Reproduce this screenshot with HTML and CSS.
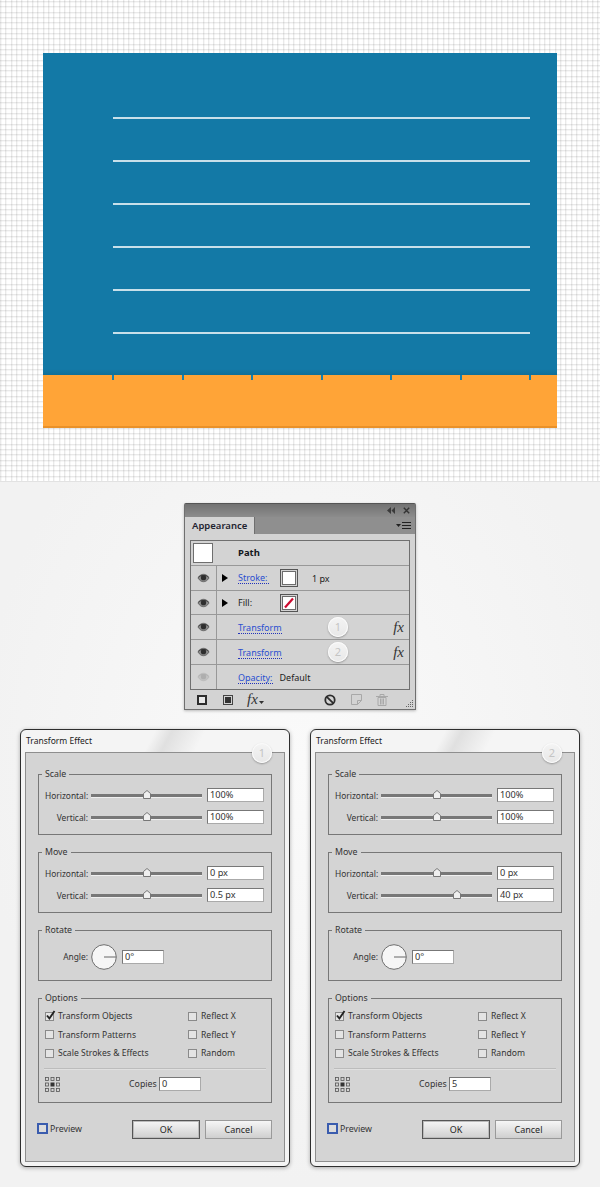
FILE: index.html
```html
<!DOCTYPE html>
<html lang="en">
<head>
<meta charset="utf-8">
<title>Transform Effect</title>
<link rel="stylesheet" href="styles.css">
</head>
<body>
<svg class="sprite" aria-hidden="true">
  <symbol id="eye" viewBox="0 0 14 10"><path d="M1 5C3 2 5 1 7 1s4 1 6 4c-2 3-4 4-6 4S3 8 1 5z" fill="#8a8a8a" stroke="#555" stroke-width=".8"/><circle cx="7" cy="4.6" r="2.8" fill="#2e2e2e"/><path d="M1.5 4C4 1.6 10 1.6 12.5 4" fill="none" stroke="#333" stroke-width="1"/></symbol>
  <symbol id="anchors" viewBox="0 0 15 15"><g fill="none" stroke="#555" stroke-width=".8"><rect x=".5" y=".5" width="3" height="3"/><rect x="6" y=".5" width="3" height="3"/><rect x="11.5" y=".5" width="3" height="3"/><rect x=".5" y="6" width="3" height="3"/><rect x="11.5" y="6" width="3" height="3"/><rect x=".5" y="11.5" width="3" height="3"/><rect x="6" y="11.5" width="3" height="3"/><rect x="11.5" y="11.5" width="3" height="3"/></g><rect x="5.5" y="5.5" width="4" height="4" fill="#333"/></symbol>
  <symbol id="check" viewBox="0 0 11 11"><path d="M2 5.500l2.400 3L9.500 1" fill="none" stroke="#222" stroke-width="1.900"/></symbol>
  <symbol id="dial" viewBox="0 0 26 26"><circle cx="13" cy="13" r="12.300" fill="#f6f6f6" stroke="#6e6e6e" stroke-width="1"/><path d="M13 13h12" stroke="#666" stroke-width="1"/></symbol>
  <symbol id="thumb" viewBox="0 0 8 9"><path d="M.5 8.500V3.500L4 .5l3.500 3v5z" fill="#efefef" stroke="#777" stroke-width="1"/></symbol>
</svg>

<section class="canvas">
  <div class="art">
    <div class="sky">
      <i class="rule"></i><i class="rule"></i><i class="rule"></i><i class="rule"></i><i class="rule"></i><i class="rule"></i>
    </div>
    <div class="band">
      <i class="tick"></i><i class="tick"></i><i class="tick"></i><i class="tick"></i><i class="tick"></i><i class="tick"></i><i class="tick"></i>
    </div>
  </div>
</section>

<section class="lower">
  <div class="panel">
    <div class="panel-title">
      <svg class="collapse" viewBox="0 0 8 7"><path d="M4 0v7L0 3.500zM8 0v7L4.500 3.500z" fill="#3a3a3a"/></svg>
      <svg class="close" viewBox="0 0 7 7"><path d="M.8.8l5.400 5.400M6.200.8L.8 6.200" stroke="#333" stroke-width="1.400"/></svg>
    </div>
    <div class="panel-tabs">
      <div class="tab">Appearance</div>
      <svg class="menu" viewBox="0 0 16 8"><path d="M0 2h5L2.500 5z" fill="#222"/><path d="M6 .5h9M6 3.500h9M6 6.500h9" stroke="#222" stroke-width="1"/></svg>
    </div>
    <div class="table">
      <div class="row row-path">
        <div class="cell-thumb"><span class="thumbnail"></span></div>
        <b class="path-name">Path</b>
      </div>
      <div class="row">
        <div class="cell-eye"><svg class="eye"><use href="#eye"/></svg></div>
        <span class="tri"></span>
        <a class="link link-stroke">Stroke:</a>
        <span class="swatch"></span>
        <span class="weight">1 px</span>
      </div>
      <div class="row row-short">
        <div class="cell-eye"><svg class="eye"><use href="#eye"/></svg></div>
        <span class="tri"></span>
        <span class="plain link-stroke">Fill:</span>
        <span class="swatch"><svg viewBox="0 0 12 12"><path d="M2 10.500L10 1.500" stroke="#cc0a2f" stroke-width="2.200"/></svg></span>
      </div>
      <div class="row">
        <div class="cell-eye"><svg class="eye"><use href="#eye"/></svg></div>
        <a class="link link-indent">Transform</a>
        <span class="badge badge-row">1</span>
        <i class="fx">fx</i>
      </div>
      <div class="row">
        <div class="cell-eye"><svg class="eye"><use href="#eye"/></svg></div>
        <a class="link link-indent">Transform</a>
        <span class="badge badge-row">2</span>
        <i class="fx">fx</i>
      </div>
      <div class="row row-last">
        <div class="cell-eye"><svg class="eye faded"><use href="#eye"/></svg></div>
        <a class="link link-indent">Opacity:</a>
        <span class="plain opacity-value">Default</span>
      </div>
    </div>
    <div class="panel-foot">
      <span class="ico-square"></span>
      <span class="ico-square2"></span>
      <i class="fx fx-foot">fx<svg class="fx-arrow" viewBox="0 0 5 3"><path d="M0 0h5L2.500 3z" fill="#333"/></svg></i>
      <svg class="ico-no" viewBox="0 0 12 12"><circle cx="6" cy="6" r="4.700" fill="none" stroke="#2c2c2c" stroke-width="1.800"/><path d="M2.800 2.800l6.400 6.400" stroke="#2c2c2c" stroke-width="1.800"/></svg>
      <svg class="ico-new" viewBox="0 0 11 11"><path d="M.5.5h10v6l-4 4h-6z" fill="none" stroke="#a8a8a8"/><path d="M10.500 6.500h-4v4" fill="none" stroke="#a8a8a8"/></svg>
      <svg class="ico-trash" viewBox="0 0 12 12"><path d="M0 2.500h12M4 2V.5h4V2M2 3.500h8v8H2zM4.500 4.500v6M6 4.500v6M7.500 4.500v6" fill="none" stroke="#a8a8a8"/></svg>
      <svg class="grip" viewBox="0 0 9 9"><path d="M7 1h1v1H7zM5 3h1v1H5zM7 3h1v1H7zM3 5h1v1H3zM5 5h1v1H5zM7 5h1v1H7zM1 7h1v1H1zM3 7h1v1H3zM5 7h1v1H5zM7 7h1v1H7z" fill="#666"/></svg>
    </div>
  </div>

  <div class="dialogs">
    <div class="dialog">
      <div class="dialog-title">Transform Effect</div>
      <span class="badge badge-dialog">1</span>
      <div class="dialog-body">
        <div class="group">
          <div class="legend">Scale</div>
          <div class="slider-row"><label class="lab">Horizontal:</label><div class="track"><svg class="thumb"><use href="#thumb"/></svg></div><span class="field">100%</span></div>
          <div class="slider-row"><label class="lab">Vertical:</label><div class="track"><svg class="thumb"><use href="#thumb"/></svg></div><span class="field">100%</span></div>
        </div>
        <div class="group">
          <div class="legend">Move</div>
          <div class="slider-row"><label class="lab">Horizontal:</label><div class="track"><svg class="thumb"><use href="#thumb"/></svg></div><span class="field">0 px</span></div>
          <div class="slider-row"><label class="lab">Vertical:</label><div class="track"><svg class="thumb"><use href="#thumb"/></svg></div><span class="field">0.5 px</span></div>
        </div>
        <div class="group group-rotate">
          <div class="legend">Rotate</div>
          <div class="angle-row"><label class="lab">Angle:</label><svg class="dial"><use href="#dial"/></svg><span class="field field-short">0°</span></div>
        </div>
        <div class="group group-options">
          <div class="legend">Options</div>
          <div class="checks">
            <div class="chk"><span class="box"><svg><use href="#check"/></svg></span>Transform Objects</div>
            <div class="chk"><span class="box"></span>Reflect X</div>
            <div class="chk"><span class="box"></span>Transform Patterns</div>
            <div class="chk"><span class="box"></span>Reflect Y</div>
            <div class="chk"><span class="box"></span>Scale Strokes &amp; Effects</div>
            <div class="chk"><span class="box"></span>Random</div>
          </div>
          <div class="sep"></div>
          <div class="copies-row">
            <svg class="anchors"><use href="#anchors"/></svg>
            <label class="copies-label">Copies</label>
            <span class="field field-short">0</span>
          </div>
        </div>
        <div class="actions">
          <div class="preview"><span class="box box-focus"></span>Preview</div>
          <div class="btn btn-ok">OK</div>
          <div class="btn">Cancel</div>
        </div>
      </div>
    </div>

    <div class="dialog">
      <div class="dialog-title">Transform Effect</div>
      <span class="badge badge-dialog">2</span>
      <div class="dialog-body">
        <div class="group">
          <div class="legend">Scale</div>
          <div class="slider-row"><label class="lab">Horizontal:</label><div class="track"><svg class="thumb"><use href="#thumb"/></svg></div><span class="field">100%</span></div>
          <div class="slider-row"><label class="lab">Vertical:</label><div class="track"><svg class="thumb"><use href="#thumb"/></svg></div><span class="field">100%</span></div>
        </div>
        <div class="group">
          <div class="legend">Move</div>
          <div class="slider-row"><label class="lab">Horizontal:</label><div class="track"><svg class="thumb"><use href="#thumb"/></svg></div><span class="field">0 px</span></div>
          <div class="slider-row"><label class="lab">Vertical:</label><div class="track"><svg class="thumb thumb-far"><use href="#thumb"/></svg></div><span class="field">40 px</span></div>
        </div>
        <div class="group group-rotate">
          <div class="legend">Rotate</div>
          <div class="angle-row"><label class="lab">Angle:</label><svg class="dial"><use href="#dial"/></svg><span class="field field-short">0°</span></div>
        </div>
        <div class="group group-options">
          <div class="legend">Options</div>
          <div class="checks">
            <div class="chk"><span class="box"><svg><use href="#check"/></svg></span>Transform Objects</div>
            <div class="chk"><span class="box"></span>Reflect X</div>
            <div class="chk"><span class="box"></span>Transform Patterns</div>
            <div class="chk"><span class="box"></span>Reflect Y</div>
            <div class="chk"><span class="box"></span>Scale Strokes &amp; Effects</div>
            <div class="chk"><span class="box"></span>Random</div>
          </div>
          <div class="sep"></div>
          <div class="copies-row">
            <svg class="anchors"><use href="#anchors"/></svg>
            <label class="copies-label">Copies</label>
            <span class="field field-short">5</span>
          </div>
        </div>
        <div class="actions">
          <div class="preview"><span class="box box-focus"></span>Preview</div>
          <div class="btn btn-ok">OK</div>
          <div class="btn">Cancel</div>
        </div>
      </div>
    </div>
  </div>
</section>
</body>
</html>
```

FILE: styles.css
```css
* { box-sizing: border-box; }
html, body { margin: 0; padding: 0; }
body {
  width: 600px;
  height: 1187px;
  overflow: hidden;
  background: #f2f2f2;
  font-family: "Noto Sans", "Open Sans", sans-serif;
  font-size: 9px;
  color: #2a2a2a;
}
.sprite { display: none; }

/* artboard */
.canvas {
  height: 482px;
  padding: 53px 43px 0;
  background-color: #fff;
  background-image:
    linear-gradient(to right,
      rgba(0,0,0,.085) 0 1px, rgba(0,0,0,.03) 1px 2px, transparent 2px 5px,
      rgba(0,0,0,.085) 5px 6px, rgba(0,0,0,.03) 6px 7px, transparent 7px 11px,
      rgba(0,0,0,.085) 11px 12px, rgba(0,0,0,.03) 12px 13px, transparent 13px 16px),
    linear-gradient(to bottom,
      rgba(0,0,0,.085) 0 1px, rgba(0,0,0,.03) 1px 2px, transparent 2px 5px,
      rgba(0,0,0,.085) 5px 6px, rgba(0,0,0,.03) 6px 7px, transparent 7px 11px,
      rgba(0,0,0,.085) 11px 12px, rgba(0,0,0,.03) 12px 13px, transparent 13px 16px);
  background-size: 16px 16px;
  background-position: 0 1px;
  border-bottom: 1px solid #e2e2e2;
}
.art { width: 514px; height: 375px; display: flex; flex-direction: column; }
.sky {
  height: 322px;
  padding: 64px 27px 0 70px;
  display: flex;
  flex-direction: column;
  gap: 41px;
  background: linear-gradient(to bottom, #1379a6 0, #1379a6 316px, #106f97 322px);
}
.rule { display: block; height: 2px; background: #c8e0ea; }
.band {
  height: 53px;
  padding: 0 26px 0 69px;
  display: flex;
  justify-content: space-between;
  align-items: flex-start;
  background: #ffa437;
  border-bottom: 2px solid #ea9128;
}
.tick { display: block; width: 2px; height: 5px; background: #1580b0; }

/* lower */
.lower {
  height: 705px;
  padding-top: 21px;
  background: radial-gradient(ellipse 320px 420px at 300px 280px, #fafafa 0, #f2f2f2 100%);
}

/* appearance panel */
.panel {
  width: 232px;
  height: 207px;
  margin-left: 184px;
  background: #d3d3d3;
  border: 1px solid #6f6f6f;
  border-top-color: #555;
  border-radius: 2px 2px 0 0;
  box-shadow: 0 1px 3px rgba(0,0,0,.25);
  display: flex;
  flex-direction: column;
}
.panel-title {
  height: 13px;
  display: flex;
  justify-content: flex-end;
  align-items: center;
  gap: 8px;
  padding-right: 5px;
  background: linear-gradient(#727272, #8c8c8c);
}
.collapse { width: 8px; height: 7px; }
.close { width: 7px; height: 7px; }
.panel-tabs {
  height: 17px;
  display: flex;
  justify-content: space-between;
  align-items: center;
  padding-right: 3px;
  background: #8f8f8f;
}
.tab {
  width: 70px;
  height: 17px;
  padding-left: 7px;
  background: #d3d3d3;
  border-right: 1px solid #6f6f6f;
  font-size: 9.500px;
  font-weight: 600;
  line-height: 17px;
  color: #1f2430;
}
.menu { width: 16px; height: 8px; }
.table {
  margin: 6px 5px 0;
  height: 150px;
  border: 1px solid #6f6f6f;
  display: flex;
  flex-direction: column;
}
.row {
  position: relative;
  height: 25px;
  display: flex;
  align-items: center;
  border-bottom: 1px solid #989898;
}
.row-short { height: 24px; }
.row-last { border-bottom: 0; height: 24px; }
.cell-eye {
  width: 26px;
  align-self: stretch;
  flex: none;
  border-right: 1px solid #989898;
  display: flex;
  align-items: center;
  justify-content: center;
}
.cell-thumb { width: 26px; flex: none; padding-left: 2px; }
.thumbnail { display: block; width: 20px; height: 20px; background: #fff; border: 1px solid #6f6f6f; }
.eye { width: 13px; height: 10px; }
.faded { opacity: .22; }
.tri {
  margin-left: 5px;
  width: 0; height: 0;
  border-left: 6px solid #000;
  border-top: 4.500px solid transparent;
  border-bottom: 4.500px solid transparent;
}
.path-name { margin: -2px 0 0 21px; font-size: 9.500px; font-weight: 700; color: #141820; }
.link {
  color: #2a4fd0;
  border-bottom: 1px dotted #2233bb;
  line-height: 11px;
}
.plain { color: #1c1c1c; }
.link-stroke { margin-left: 10px; width: 31px; flex: none; }
.plain.link-stroke { width: auto; }
.link-indent { margin: 2px 0 0 21px; }
.swatch {
  position: absolute;
  left: 89px;
  top: 3px;
  width: 18px;
  height: 18px;
  padding: 2px;
  display: block;
  border: 1px solid #555;
  box-shadow: inset 0 0 0 1px #d3d3d3, inset 0 0 0 2px #6c6c6c, inset 0 0 0 20px #fff;
}
.swatch svg { display: block; width: 12px; height: 12px; }
.weight { position: absolute; left: 121px; color: #1c1c1c; }
.opacity-value { margin: 0 0 0 7px; }
.fx {
  position: absolute;
  right: 5px;
  font-family: "Liberation Serif", serif;
  font-size: 15px;
  font-style: italic;
  color: #333;
  line-height: 14px;
}
.badge {
  position: absolute;
  width: 20px;
  height: 20px;
  border-radius: 50%;
  background: linear-gradient(#f4f4f4, #e8e8e8);
  box-shadow: 0 1px 2px rgba(0,0,0,.3), inset 0 0 0 1px #fafafa;
  color: #c4c4c4;
  font-size: 11px;
  line-height: 20px;
  text-align: center;
}
.badge-row { left: 137px; top: 2px; }
.badge-dialog { right: 17px; top: 13px; }

.panel-foot {
  position: relative;
  flex: 1;
  display: flex;
  align-items: center;
  padding-left: 12px;
}
.ico-square { width: 10px; height: 10px; border: 2px solid #2c2c2c; background: #e8e8e8; flex: none; }
.ico-square2 { width: 10px; height: 10px; margin-left: 16px; border: 1px solid #444; background: #333; box-shadow: inset 0 0 0 1px #d3d3d3; flex: none; }
.fx-foot { position: absolute; left: 62px; right: auto; top: 2px; }
.fx-arrow { width: 5px; height: 3px; margin-left: 1px; }
.ico-no { position: absolute; left: 139px; top: 4px; width: 12px; height: 12px; }
.ico-new { position: absolute; left: 166px; top: 4px; width: 11px; height: 11px; }
.ico-trash { position: absolute; left: 191px; top: 4px; width: 12px; height: 12px; }
.grip { position: absolute; right: 1px; bottom: 1px; width: 9px; height: 9px; }

/* dialogs */
.dialogs { display: flex; gap: 20px; margin: 19px 0 0 20px; }
.dialog {
  position: relative;
  width: 270px;
  height: 438px;
  padding: 0 4px 4px;
  border: 1px solid #2e2e2e;
  border-radius: 6px;
  background: linear-gradient(118deg, #f4f4f4 0, #f4f4f4 48%, #e0e0e0 54%, #f5f5f5 66%, #f5f5f5 100%);
  background-size: 100% 24px;
  background-repeat: no-repeat;
  background-color: #f4f4f4;
  box-shadow: 0 1px 4px rgba(0,0,0,.3);
  display: flex;
  flex-direction: column;
}
.dialog-title {
  height: 22px;
  padding: 5px 1px 0;
  font-size: 8.500px;
  line-height: 11px;
  color: #1a1a1a;
}
.dialog-body {
  flex: 1;
  padding: 21px 12px 0;
  background: #d4d4d4;
  border: 1px solid #8e8e8e;
  display: flex;
  flex-direction: column;
  gap: 17px;
}
.group {
  height: 61px;
  padding: 0 6px;
  border: 1px solid #777;
  display: flex;
  flex-direction: column;
  gap: 8px;
}
.group-rotate { height: 51px; gap: 7px; }
.group-options { height: 105px; gap: 0; }
.legend {
  width: fit-content;
  height: 12px;
  margin: -7px 0 0 -3px;
  padding: 0 3px;
  background: #d4d4d4;
  line-height: 13px;
  font-size: 8.800px;
  color: #333;
}
.slider-row { height: 14px; display: flex; align-items: center; }
.lab { width: 43px; flex: none; text-align: right; color: #333; font-size: 8.400px; white-space: nowrap; }
.track {
  position: relative;
  width: 111px;
  height: 3px;
  margin: 0 5px 0 3px;
  background: #777;
  box-shadow: 0 1px 0 #efefef;
}
.thumb { position: absolute; left: 52px; top: -4px; width: 8px; height: 9px; }
.thumb-far { left: 72px; }
.field {
  width: 57px;
  height: 14px;
  padding-left: 2px;
  background: #fff;
  border: 1px solid #777;
  border-right-color: #aaa;
  border-bottom-color: #aaa;
  font-size: 9.200px;
  line-height: 12px;
  color: #333;
}
.field-short { width: 42px; }
.angle-row { display: flex; align-items: center; height: 27px; }
.dial { width: 26px; height: 26px; margin: 0 5px 0 3px; flex: none; }
.checks {
  margin-top: 3px;
  display: grid;
  grid-template-columns: 143px 1fr;
  grid-auto-rows: 18.500px;
  align-items: center;
}
.chk { display: flex; align-items: center; color: #333; font-size: 8.600px; white-space: nowrap; }
.box {
  width: 9px;
  height: 9px;
  margin-right: 4px;
  flex: none;
  background: #e4e4e4;
  border: 1px solid #8a8a8a;
  position: relative;
}
.box svg { position: absolute; left: -1px; top: -3px; width: 11px; height: 11px; }
.sep { height: 1px; margin: 5px 0 0 -1px; width: 222px; background: #bcbcbc; box-shadow: 0 1px 0 #e0e0e0; }
.copies-row { height: 15px; margin-top: 8px; display: flex; align-items: center; }
.anchors { width: 15px; height: 15px; flex: none; }
.copies-label { margin-left: 69px; width: 30px; color: #333; font-size: 8.800px; }
.actions { display: flex; align-items: center; height: 19px; margin-left: -1px; }
.preview { display: flex; align-items: center; width: 95px; margin-top: -2px; color: #333; font-size: 8.800px; }
.box-focus { width: 11px; height: 11px; margin-right: 2px; border: 2px solid #3a5cae; background: #dcdcdc; }
.btn {
  width: 67px;
  height: 19px;
  margin-left: 5px;
  background: linear-gradient(#f6f6f6, #cfcfcf);
  border: 1px solid #9a9a9a;
  text-align: center;
  font-size: 9px;
  line-height: 17px;
  color: #1f1f1f;
}
.btn-ok { width: 68px; margin-left: 0; border: 1px solid #555; box-shadow: inset 0 0 0 1px #bbb; }
```
